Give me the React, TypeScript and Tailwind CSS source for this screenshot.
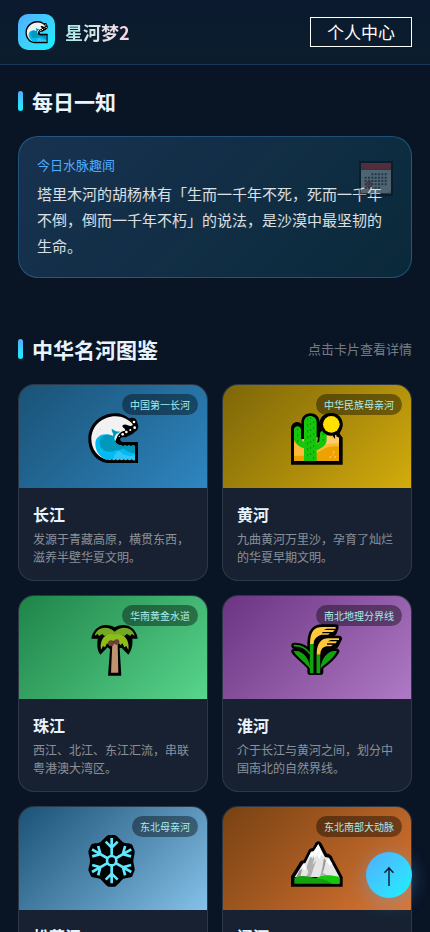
import type { ReactNode } from "react";

const WaveIcon = ({ className }: { className: string }) => (
  <svg viewBox="0 0 168 168" className={className} aria-hidden="true">
    <path
      fill="#000"
      d="M159 156H74C36 156 10 124 10 84C10 40 46 7 92 7C108 7 122 13 132 22C141 18 156 21 156 34C162 42 162 58 150 62C144 70 132 72 126 77C120 81 110 76 106 82C104 88 108 93 114 93H159Z"
    />
    <path
      fill="#f2f2f2"
      d="M66 146C38 140 19 114 19 85C19 45 52 16 92 16C112 16 132 26 143 40C144 45 136 46 128 43C122 38 112 40 112 46C114 52 124 54 120 59C110 60 102 66 98 74L66 146Z"
    />
    <path
      fill="#00bcf2"
      d="M76 148C50 146 31 124 31 98C31 80 46 70 62 70C70 70 78 72 84 74C88 68 78 60 80 54C86 56 90 62 96 62C100 60 106 64 112 60C96 64 88 72 88 84C90 96 98 103 112 103H150V148Z"
    />
    <path
      fill="#0099bc"
      d="M82 54C88 60 92 60 96 62C100 62 106 64 111 61C95 66 87 74 88 84C90 97 100 103 112 103H150V126C138 128 124 122 116 112C110 116 102 120 94 116C76 130 44 122 44 94C44 80 54 70 68 71C76 72 82 78 85 74C88 68 78 62 82 54Z"
    />
    <path fill="#33c5f5" d="M84 148C88 128 96 122 104 120C116 134 134 138 150 132V148Z" />
    <path
      fill="#000"
      d="M74 150l6-5 6 4 6-4 6 4 6-4 6 4 6-4 6 4 6-4 6 4 6-4 6 5v2H74zM108 101l6 4 6-4 6 4 6-4 6 4 6-4 6 3v-6h-42z"
    />
    <g fill="#fff">
      <circle cx="124" cy="63" r="4" />
      <circle cx="113" cy="70" r="4" />
      <circle cx="136" cy="57" r="3" />
      <circle cx="149" cy="50" r="4" />
      <circle cx="147" cy="33" r="4" />
      <circle cx="103" cy="76" r="2" />
    </g>
    <g fill="#e3e3e3">
      <circle cx="46" cy="54" r="3" />
      <circle cx="66" cy="44" r="2" />
      <circle cx="36" cy="68" r="2" />
    </g>
  </svg>
);

const CactusIcon = ({ className }: { className: string }) => (
  <svg viewBox="0 0 168 168" className={className} aria-hidden="true">
    <path
      fill="#000"
      d="M6 161V54C6 32 30 28 37 40V34C37 -2 92 -2 92 34C94 -2 160 -4 160 40C160 56 154 62 152 68L161 80V161Z"
    />
    <path fill="#ffb938" d="M15 88L150 70V150H15Z" />
    <path fill="#ffcd6b" d="M110 72L122 74L132 84V72H138V84H142V74L150 78V96L110 100Z" />
    <path fill="#eda200" d="M15 132H66C88 132 100 102 150 106V150H15Z" />
    <path fill="#ffb938" d="M15 134H50V126L15 112Z" />
    <path fill="#000" d="M90 62C82 68 90 90 82 96L92 92V62ZM37 46C40 60 36 74 44 84H46V40Z" />
    <path
      fill="#16c60c"
      d="M45 150V112C26 106 15 94 15 82V56C15 42 36 42 36 56V80C36 86 40 90 45 92V34C45 9 83 9 83 34V98C90 94 93 90 93 84V68C93 56 113 56 113 68V88C113 102 98 112 83 118V150Z"
    />
    <path
      stroke="#0f8a09"
      strokeWidth="3"
      strokeDasharray="6 12"
      d="M56 22V146M74 30V146M65 18V142M26 52V94M103 66V100"
    />
    <circle cx="127" cy="40" r="34" fill="#000" />
    <circle cx="127" cy="40" r="25" fill="#ffe100" />
    <path fill="#000" d="M132 66h6v18l-6-8zM142 66h8v14l-8-4z" />
    <g fill="#ffc34d">
      <circle cx="124" cy="138" r="3" />
      <circle cx="134" cy="124" r="3" />
      <circle cx="139" cy="138" r="3" />
      <circle cx="132" cy="132" r="2" />
    </g>
  </svg>
);

const PalmIcon = ({ className }: { className: string }) => (
  <svg viewBox="0 0 168 168" className={className} aria-hidden="true">
    <path
      fill="#000"
      d="M69 161L75 82L68 76L46 98C36 86 36 68 38 50H19C22 20 54 -4 89 16C124 -4 156 20 158 50H142C144 68 140 86 130 98L110 78H104L109 161Z"
    />
    <path fill="#bf9270" d="M82 64H98L100 152H78Z" />
    <path
      fill="#73aa24"
      d="M89 29C68 8 34 16 29 41L38 36L42 42L52 36L58 42L70 38L89 44L108 38L118 42L126 36L136 42L140 36L149 41C144 16 110 8 89 29Z"
    />
    <path
      fill="#8cbd18"
      d="M89 38C66 30 42 48 48 84L54 72L60 76L66 64L72 68L80 58L89 56L100 60L106 70L112 64L118 76L124 72L130 84C136 52 112 30 89 38Z"
    />
    <circle cx="78" cy="64" r="9" fill="#6b4036" />
    <circle cx="95" cy="60" r="8" fill="#6b4036" />
  </svg>
);

const RiceIcon = ({ className }: { className: string }) => (
  <svg viewBox="0 0 168 168" className={className} aria-hidden="true">
    <g stroke="#000" strokeWidth="18" strokeLinejoin="round" strokeLinecap="round" fill="#000">
      <path d="M64 66C64 28 80 16 100 16H140L134 32L116 44L84 46L74 66V150H64Z" />
      <path d="M84 102C84 64 100 50 118 50H150L140 70L120 78C98 82 94 90 94 100V150H84Z" />
      <path d="M16 71C36 70 50 78 62 92M16 88C40 84 62 104 66 138C54 122 28 104 16 88ZM142 88C118 84 98 104 95 134C112 122 132 106 142 88Z" />
    </g>
    <path
      fill="#ffc83d"
      d="M63 66C63 28 76 15 100 15H140V20H114L104 24H137L132 30H100V34H122L118 38H98C84 42 74 50 74 66Z"
    />
    <path
      fill="#ffc83d"
      d="M83 98C83 62 98 49 118 49H150V54H126L116 58H144L140 64H114V68H132L126 73H112C100 76 94 84 94 98Z"
    />
    <path stroke="#13a10e" strokeWidth="11" d="M68 66V154M88 98V154" />
    <path fill="none" stroke="#13a10e" strokeWidth="5" strokeLinecap="round" d="M16 71C36 70 50 78 62 94" />
    <path
      fill="#13a10e"
      d="M14 88C38 82 62 108 64 142C52 124 28 110 14 88ZM144 88C120 82 98 106 94 140C108 126 132 112 144 88Z"
    />
  </svg>
);

const SnowIcon = ({ className }: { className: string }) => (
  <svg viewBox="0 0 168 168" className={className} aria-hidden="true">
    <path
      fill="#000"
      d="M70 6H90C98 10 106 20 114 28C124 32 136 30 142 36L149 54C150 64 145 74 145 84C145 94 150 104 149 112L142 130C136 136 124 134 114 138C106 146 98 156 90 161H70C62 156 54 146 46 138C36 134 24 136 18 130L10 112C10 104 15 94 15 84C15 74 10 64 10 54L18 36C24 30 36 32 46 28C54 20 62 10 70 6Z"
    />
    <g stroke="#61e8ff" strokeWidth="8" fill="none">
      <circle cx="80" cy="83" r="14" />
      {[0, 60, 120, 180, 240, 300].map((angle) => (
        <path
          key={angle}
          transform={`rotate(${angle} 80 83)`}
          d="M80 70V15M80 44L62 26M80 44L98 26"
        />
      ))}
    </g>
  </svg>
);

const MountainIcon = ({ className }: { className: string }) => (
  <svg viewBox="0 0 168 168" className={className} aria-hidden="true">
    <path
      fill="#000"
      d="M6 161V130L30 92C32 84 40 82 44 82L58 54C60 46 68 46 72 44L78 32C82 22 94 22 98 32L114 62C124 62 130 70 132 78L161 132V161Z"
    />
    <path fill="#e6e6e6" d="M17 132L42 92L49 90L66 56L74 54L88 34L108 72L120 74L151 132Z" />
    <path
      fill="#b0b0b0"
      d="M53 102L68 60L76 78L70 96L82 82L64 134H50L58 118ZM104 76L112 84L100 118L124 134H92L100 104Z"
    />
    <path fill="#9a9a9a" d="M106 76L110 84L104 112L98 122ZM32 112L42 96L34 132H22Z" />
    <path
      fill="#fff"
      d="M88 33L72 62L76 74L84 66L90 78L98 64L106 76ZM67 56L58 76L66 70L70 78L74 60ZM45 90L32 112L42 106L46 114L52 104ZM118 76L108 92L116 88L122 98L130 92Z"
    />
    <path fill="#13a10e" d="M16 134C40 124 60 130 80 136C104 124 130 126 152 134V152H16Z" />
    <path fill="#16c60c" d="M80 136C104 124 130 126 152 132V152H128C118 142 100 138 80 136Z" />
  </svg>
);

const CalendarIcon = ({ className }: { className: string }) => (
  <svg viewBox="0 0 102 105" className={className} aria-hidden="true">
    <path fill="#000" d="M0 0H102V105H0Z" />
    <path fill="#e6e6e6" d="M6 26H96V97H6Z" />
    <path fill="#e8352e" d="M6 6H96V26H6Z" />
    <g stroke="#555" strokeWidth="6" strokeDasharray="6 4">
      <path d="M37 40H86M17 50H86M17 60H86M17 70H86M17 80H66" />
    </g>
    <circle cx="30" cy="70" r="7" fill="none" stroke="#e8352e" strokeWidth="4" />
    <path fill="#bbb" d="M86 97L96 87V97Z" />
  </svg>
);

type River = {
  name: string;
  tag: string;
  desc: string;
  cover: string;
  icon: ReactNode;
};

const rivers: River[] = [
  {
    name: "长江",
    tag: "中国第一长河",
    desc: "发源于青藏高原，横贯东西，滋养半壁华夏文明。",
    cover: "from-[#1a5276] to-[#2e86c1]",
    icon: <WaveIcon className="size-14" />,
  },
  {
    name: "黄河",
    tag: "中华民族母亲河",
    desc: "九曲黄河万里沙，孕育了灿烂的华夏早期文明。",
    cover: "from-[#7d6608] to-[#d4ac0d]",
    icon: <CactusIcon className="size-14" />,
  },
  {
    name: "珠江",
    tag: "华南黄金水道",
    desc: "西江、北江、东江汇流，串联粤港澳大湾区。",
    cover: "from-[#1e8449] to-[#58d68d]",
    icon: <PalmIcon className="size-14" />,
  },
  {
    name: "淮河",
    tag: "南北地理分界线",
    desc: "介于长江与黄河之间，划分中国南北的自然界线。",
    cover: "from-[#6c3483] to-[#af7ac5]",
    icon: <RiceIcon className="size-14" />,
  },
  {
    name: "松花江",
    tag: "东北母亲河",
    desc: "源自长白山天池，滋养东北广袤的黑土地。",
    cover: "from-[#1a5276] to-[#85c1e9]",
    icon: <SnowIcon className="size-14" />,
  },
  {
    name: "辽河",
    tag: "东北南部大动脉",
    desc: "流经辽宁大地，见证东北工业文明的兴起。",
    cover: "from-[#784212] to-[#dc7633]",
    icon: <MountainIcon className="size-14" />,
  },
];

const SectionTitle = ({ children }: { children: ReactNode }) => (
  <h2 className="flex items-center gap-[9px] text-[21px] leading-[30px] font-bold text-[#e8f4fd]">
    <span className="h-5 w-[5px] rounded-[3px] bg-linear-to-b from-[#4facfe] to-[#00f2fe]" />
    {children}
  </h2>
);

const RiverCard = ({ river }: { river: River }) => (
  <article className="overflow-hidden rounded-2xl border border-white/10 bg-white/6">
    {/* Cover */}
    <div className={`relative flex h-[103px] items-center justify-center bg-linear-135 pt-[5px] ${river.cover}`}>
      {river.icon}
      <span className="absolute top-[9px] right-[9px] rounded-full bg-black/40 px-2 text-[10px] leading-[21px] text-[#a8edea]">
        {river.tag}
      </span>
    </div>

    {/* Name and summary */}
    <div className="p-3.5">
      <h3 className="mb-1 text-base leading-6 font-bold text-[#e8f4fd]">{river.name}</h3>
      <p className="text-xs leading-[18px] text-white/50">{river.desc}</p>
    </div>
  </article>
);

const App = () => {
  return (
    <div
      lang="zh-CN"
      className="min-h-screen bg-[#091425] pb-8 font-['Noto_Sans_CJK_SC',sans-serif] text-white"
    >
      <header className="flex items-center justify-between border-b border-[#4facfe]/20 bg-linear-to-b from-[#0b1a2f] to-[#0b1d2d] px-[18px] py-3.5">
        <div className="flex items-center gap-2.5">
          <div className="flex h-9 w-[37px] items-center justify-center rounded-[10px] bg-linear-135 from-[#4facfe] to-[#00f2fe]">
            <WaveIcon className="size-[25px]" />
          </div>
          <span className="bg-linear-to-r from-[#a8edea] to-[#fed6e3] bg-clip-text text-lg leading-6 font-bold text-transparent">
            星河梦2
          </span>
        </div>
        <button type="button" className="border border-white px-4 text-[17px] leading-7">
          个人中心
        </button>
      </header>

      <main className="px-[18px] pt-[21px]">
        <section className="mb-14">
          <SectionTitle>每日一知</SectionTitle>
          <div className="relative mt-5 rounded-[20px] border border-[#4facfe]/30 bg-linear-135 from-[#4facfe]/20 to-[#00f2fe]/10 p-[18px]">
            <h3 className="mb-1.5 text-[13px] leading-5 text-[#4facfe]">今日水脉趣闻</h3>
            <p className="text-[15px] leading-[26px] text-white/85">
              塔里木河的胡杨林有「生而一千年不死，死而一千年不倒，倒而一千年不朽」的说法，是沙漠中最坚韧的生命。
            </p>
            <CalendarIcon className="absolute top-6 right-[18px] h-[35px] w-[34px] opacity-30" />
          </div>
        </section>

        <section>
          <div className="mb-5 flex items-center justify-between">
            <SectionTitle>中华名河图鉴</SectionTitle>
            <span className="text-[13px] leading-5 text-white/45">点击卡片查看详情</span>
          </div>
          <div className="grid grid-cols-2 gap-3.5">
            {rivers.map((river) => (
              <RiverCard key={river.name} river={river} />
            ))}
          </div>
        </section>
      </main>

      {/* Back to top */}
      <button
        type="button"
        aria-label="返回顶部"
        onClick={() => window.scrollTo({ top: 0, behavior: "smooth" })}
        className="fixed right-[18px] bottom-[34px] flex size-[46px] items-center justify-center rounded-full bg-linear-135 from-[#4facfe] to-[#00f2fe] text-[21px] leading-none text-[#0a1628] shadow-[0_4px_20px_rgba(79,172,254,0.4)]"
      >
        ↑
      </button>
    </div>
  );
};

export default App;
